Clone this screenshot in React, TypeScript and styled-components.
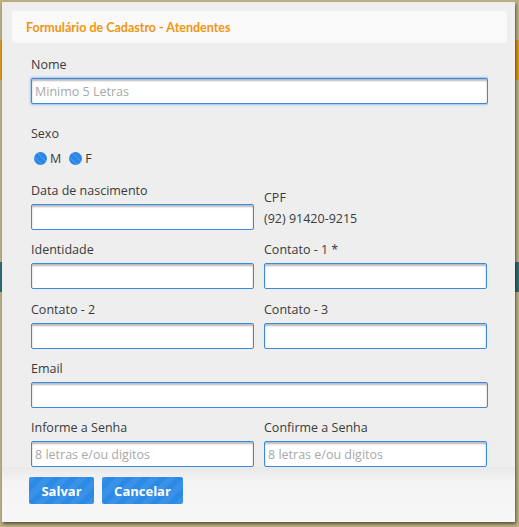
import React from "react";
import styled, { createGlobalStyle } from "styled-components";

const Global = createGlobalStyle`
  html, body { margin: 0; padding: 0; }
  body {
    width: 519px;
    height: 527px;
    overflow: hidden;
    background:
      linear-gradient(to bottom,
        #bcb083 0px, #bcb083 40px,
        #d8971c 40px, #d8971c 80px,
        #bcb083 80px, #bcb083 262px,
        #2f6c74 262px, #2f6c74 292px,
        #bcb083 292px);
    font-family: "Open Sans", "Noto Sans", sans-serif;
  }
`;

const Dialog = styled.div`
  box-sizing: border-box;
  margin: 2px 0 0 2px;
  width: 513px;
  height: 520px;
  background: #eeeeee;
  box-shadow: 1px 2px 3px rgba(0, 0, 0, 0.55);
  padding: 9px 8px 0 10px;
  display: flex;
  flex-direction: column;
  overflow: hidden;
  position: relative;
`;

const Header = styled.div`
  height: 32px;
  background: #f9f9f9;
  border-radius: 3px;
  display: flex;
  align-items: center;
  padding-left: 14px;
  flex: none;
`;

const Title = styled.h1`
  margin: 0;
  font-family: Lato, "Open Sans", sans-serif;
  font-weight: 700;
  font-size: 12.5px;
  color: #f0960f;
`;

const Body = styled.div`
  flex: none;
  height: 424px;
  overflow: hidden;
  padding: 13px 0 0 19px;
  box-sizing: border-box;
  width: 476px;
`;

const Field = styled.div<{ $mb?: number }>`
  display: flex;
  flex-direction: column;
  margin-bottom: ${(p) => p.$mb ?? 11}px;
`;

const Label = styled.label<{ $mb?: number }>`
  font-size: 12.5px;
  line-height: 18px;
  color: #3a3a3a;
  margin-bottom: ${(p) => p.$mb ?? 4}px;
`;

const Input = styled.input<{ $focus?: boolean }>`
  box-sizing: border-box;
  width: 100%;
  height: 26px;
  margin: 0;
  padding: 0 3px;
  border: 1px solid #3a8ae3;
  border-radius: 2px;
  background: #fff;
  box-shadow: inset 0 2px 2px rgba(0, 0, 0, 0.28)
    ${(p) => (p.$focus ? ", 0 0 2px 1px rgba(120, 180, 240, 0.7)" : "")};
  font-family: "Open Sans", "Noto Sans", sans-serif;
  font-size: 12.5px;
  color: #333;
  outline: none;
  &::placeholder {
    color: #a8a8a8;
  }
`;

const Row = styled.div`
  display: grid;
  grid-template-columns: 223px 223px;
  column-gap: 10px;
`;

const Column = styled.div<{ $pt?: number }>`
  display: flex;
  flex-direction: column;
  padding-top: ${(p) => p.$pt ?? 0}px;
`;

const Value = styled.div`
  font-size: 12.5px;
  line-height: 18px;
  color: #3a3a3a;
  margin-top: 3px;
`;

const RadioRow = styled.div`
  display: flex;
  align-items: flex-end;
  height: 20px;
  margin: 3px 0 16px 3px;
`;

const RadioOption = styled.label`
  display: flex;
  align-items: flex-end;
  font-size: 12.5px;
  line-height: 14px;
  color: #3a3a3a;
  margin-right: 8px;
`;

const Radio = styled.input`
  appearance: none;
  -webkit-appearance: none;
  margin: 0 3px 1px 0;
  width: 13px;
  height: 13px;
  border-radius: 50%;
  background-color: #2a86e6;
  background-image: repeating-linear-gradient(
    45deg,
    rgba(255, 255, 255, 0.12) 0 2px,
    transparent 2px 5px
  );
`;

const Footer = styled.div`
  flex: 1;
  margin: 0 -8px 0 -10px;
  background: linear-gradient(to bottom, #e8e8e8 0px, #f4f4f4 14px, #f7f7f7 100%);
  padding: 10px 0 0 27px;
  display: flex;
  gap: 8px;
  align-items: flex-start;
`;

const Button = styled.button<{ $w: number }>`
  width: ${(p) => p.$w}px;
  height: 27px;
  border: none;
  border-radius: 2px;
  background-color: #2a8ae6;
  background-image: repeating-linear-gradient(
    -45deg,
    rgba(255, 255, 255, 0.07) 0 6px,
    transparent 6px 12px
  );
  color: #fff;
  font-family: "Open Sans", "Noto Sans", sans-serif;
  font-weight: 700;
  font-size: 13px;
  padding: 0;
  cursor: pointer;
`;

export default function App() {
  return (
    <>
      <Global />
      <Dialog>
        <Header>
          <Title>Formulário de Cadastro - Atendentes</Title>
        </Header>
        <Body>
          <Field $mb={17}>
            <Label>Nome</Label>
            <Input $focus placeholder="Minimo 5 Letras" />
          </Field>
          <Label $mb={0}>Sexo</Label>
          <RadioRow>
            <RadioOption>
              <Radio type="radio" name="sexo" />M
            </RadioOption>
            <RadioOption>
              <Radio type="radio" name="sexo" />F
            </RadioOption>
          </RadioRow>
          <Row>
            <Field>
              <Label>Data de nascimento</Label>
              <Input />
            </Field>
            <Column $pt={7}>
              <Label $mb={0}>CPF</Label>
              <Value>(92) 91420-9215</Value>
            </Column>
          </Row>
          <Row>
            <Field $mb={12}>
              <Label>Identidade</Label>
              <Input />
            </Field>
            <Field $mb={12}>
              <Label>Contato - 1 *</Label>
              <Input />
            </Field>
          </Row>
          <Row>
            <Field>
              <Label>Contato - 2</Label>
              <Input />
            </Field>
            <Field>
              <Label>Contato - 3</Label>
              <Input />
            </Field>
          </Row>
          <Field>
            <Label>Email</Label>
            <Input />
          </Field>
          <Row>
            <Field>
              <Label>Informe a Senha</Label>
              <Input type="password" placeholder="8 letras e/ou digitos" />
            </Field>
            <Field>
              <Label>Confirme a Senha</Label>
              <Input type="password" placeholder="8 letras e/ou digitos" />
            </Field>
          </Row>
        </Body>
        <Footer>
          <Button $w={65}>Salvar</Button>
          <Button $w={81}>Cancelar</Button>
        </Footer>
      </Dialog>
    </>
  );
}
